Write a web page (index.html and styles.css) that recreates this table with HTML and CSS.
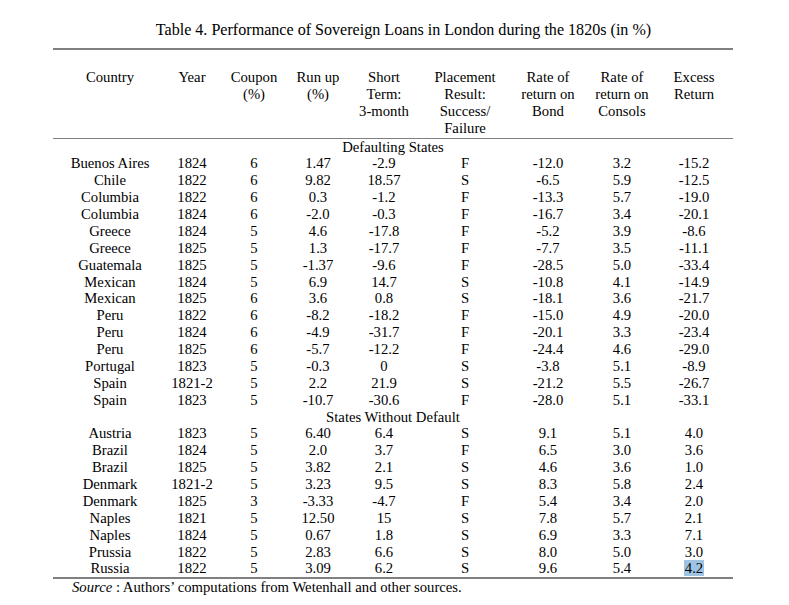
FILE: index.html
```html
<!DOCTYPE html>
<html>
<head>
<meta charset="utf-8">
<link rel="stylesheet" href="styles.css">
</head>
<body>
<div class="page">
  <div class="title">Table 4. Performance of Sovereign Loans in London during the 1820s (in %)</div>
  <table class="tbl">
    <colgroup>
      <col class="c1"><col class="c2"><col class="c3"><col class="c4"><col class="c5"><col class="c6"><col class="c7"><col class="c8"><col class="c9">
    </colgroup>
    <thead>
      <tr>
        <th>Country</th>
        <th>Year</th>
        <th>Coupon<br>(%)</th>
        <th>Run up<br>(%)</th>
        <th>Short<br>Term:<br>3-month</th>
        <th>Placement<br>Result:<br>Success/<br>Failure</th>
        <th>Rate of<br>return on<br>Bond</th>
        <th>Rate of<br>return on<br>Consols</th>
        <th>Excess<br>Return</th>
      </tr>
    </thead>
    <tbody>
      <tr class="group"><td colspan="9">Defaulting States</td></tr>
      <tr><td>Buenos Aires</td><td>1824</td><td>6</td><td>1.47</td><td>-2.9</td><td>F</td><td>-12.0</td><td>3.2</td><td>-15.2</td></tr>
      <tr><td>Chile</td><td>1822</td><td>6</td><td>9.82</td><td>18.57</td><td>S</td><td>-6.5</td><td>5.9</td><td>-12.5</td></tr>
      <tr><td>Columbia</td><td>1822</td><td>6</td><td>0.3</td><td>-1.2</td><td>F</td><td>-13.3</td><td>5.7</td><td>-19.0</td></tr>
      <tr><td>Columbia</td><td>1824</td><td>6</td><td>-2.0</td><td>-0.3</td><td>F</td><td>-16.7</td><td>3.4</td><td>-20.1</td></tr>
      <tr><td>Greece</td><td>1824</td><td>5</td><td>4.6</td><td>-17.8</td><td>F</td><td>-5.2</td><td>3.9</td><td>-8.6</td></tr>
      <tr><td>Greece</td><td>1825</td><td>5</td><td>1.3</td><td>-17.7</td><td>F</td><td>-7.7</td><td>3.5</td><td>-11.1</td></tr>
      <tr><td>Guatemala</td><td>1825</td><td>5</td><td>-1.37</td><td>-9.6</td><td>F</td><td>-28.5</td><td>5.0</td><td>-33.4</td></tr>
      <tr><td>Mexican</td><td>1824</td><td>5</td><td>6.9</td><td>14.7</td><td>S</td><td>-10.8</td><td>4.1</td><td>-14.9</td></tr>
      <tr><td>Mexican</td><td>1825</td><td>6</td><td>3.6</td><td>0.8</td><td>S</td><td>-18.1</td><td>3.6</td><td>-21.7</td></tr>
      <tr><td>Peru</td><td>1822</td><td>6</td><td>-8.2</td><td>-18.2</td><td>F</td><td>-15.0</td><td>4.9</td><td>-20.0</td></tr>
      <tr><td>Peru</td><td>1824</td><td>6</td><td>-4.9</td><td>-31.7</td><td>F</td><td>-20.1</td><td>3.3</td><td>-23.4</td></tr>
      <tr><td>Peru</td><td>1825</td><td>6</td><td>-5.7</td><td>-12.2</td><td>F</td><td>-24.4</td><td>4.6</td><td>-29.0</td></tr>
      <tr><td>Portugal</td><td>1823</td><td>5</td><td>-0.3</td><td>0</td><td>S</td><td>-3.8</td><td>5.1</td><td>-8.9</td></tr>
      <tr><td>Spain</td><td>1821-2</td><td>5</td><td>2.2</td><td>21.9</td><td>S</td><td>-21.2</td><td>5.5</td><td>-26.7</td></tr>
      <tr><td>Spain</td><td>1823</td><td>5</td><td>-10.7</td><td>-30.6</td><td>F</td><td>-28.0</td><td>5.1</td><td>-33.1</td></tr>
      <tr class="group"><td colspan="9">States Without Default</td></tr>
      <tr><td>Austria</td><td>1823</td><td>5</td><td>6.40</td><td>6.4</td><td>S</td><td>9.1</td><td>5.1</td><td>4.0</td></tr>
      <tr><td>Brazil</td><td>1824</td><td>5</td><td>2.0</td><td>3.7</td><td>F</td><td>6.5</td><td>3.0</td><td>3.6</td></tr>
      <tr><td>Brazil</td><td>1825</td><td>5</td><td>3.82</td><td>2.1</td><td>S</td><td>4.6</td><td>3.6</td><td>1.0</td></tr>
      <tr><td>Denmark</td><td>1821-2</td><td>5</td><td>3.23</td><td>9.5</td><td>S</td><td>8.3</td><td>5.8</td><td>2.4</td></tr>
      <tr><td>Denmark</td><td>1825</td><td>3</td><td>-3.33</td><td>-4.7</td><td>F</td><td>5.4</td><td>3.4</td><td>2.0</td></tr>
      <tr><td>Naples</td><td>1821</td><td>5</td><td>12.50</td><td>15</td><td>S</td><td>7.8</td><td>5.7</td><td>2.1</td></tr>
      <tr><td>Naples</td><td>1824</td><td>5</td><td>0.67</td><td>1.8</td><td>S</td><td>6.9</td><td>3.3</td><td>7.1</td></tr>
      <tr><td>Prussia</td><td>1822</td><td>5</td><td>2.83</td><td>6.6</td><td>S</td><td>8.0</td><td>5.0</td><td>3.0</td></tr>
      <tr class="last"><td>Russia</td><td>1822</td><td>5</td><td>3.09</td><td>6.2</td><td>S</td><td>9.6</td><td>5.4</td><td><span class="sel">4.2</span></td></tr>
    </tbody>
  </table>
  <div class="source"><i>Source</i> : Authors’ computations from Wetenhall and other sources.</div>
</div>
</body>
</html>
```

FILE: styles.css
```css
html, body {
  margin: 0;
  padding: 0;
  background: #ffffff;
}
body {
  font-family: "Liberation Serif", "Times New Roman", serif;
  font-size: 14.7px;
  color: #000000;
}
.page {
  padding: 20px 0 0 53px;
  width: 680px;
}
.title {
  text-align: center;
  font-size: 16.1px;
  line-height: 20px;
  padding-left: 21px;
  margin-bottom: 8px;
}
.tbl {
  width: 680px;
  border-collapse: collapse;
  table-layout: fixed;
  line-height: 16.875px;
}
.c1 { width: 114px; }
.c2 { width: 50px; }
.c3 { width: 74px; }
.c4 { width: 54px; }
.c5 { width: 78px; }
.c6 { width: 84px; }
.c7 { width: 82px; }
.c8 { width: 66px; }
.c9 { width: 78px; }
.tbl th, .tbl td {
  padding: 0;
  text-align: center;
  white-space: nowrap;
}
.tbl th {
  font-weight: normal;
  vertical-align: top;
  padding-top: 19px;
  padding-bottom: 1px;
  border-top: 2px solid #808080;
  border-bottom: 1px solid #808080;
}
.tbl tr.last td {
  border-bottom: 2px solid #808080;
}
.sel {
  background: #9fc3e3;
  padding: 0 1px;
}
.source {
  padding-left: 19px;
  line-height: 17px;
}
```
